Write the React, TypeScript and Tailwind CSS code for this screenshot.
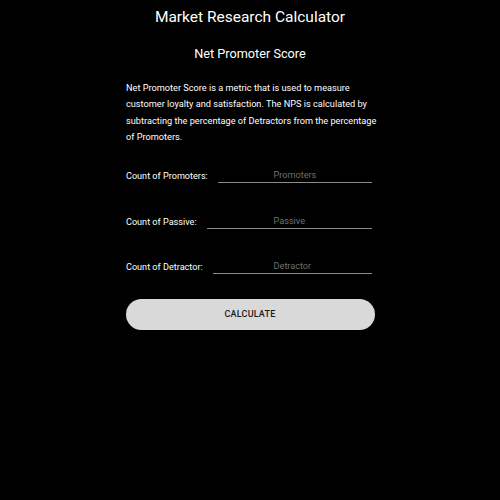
import React from "react";

function Row({ label, placeholder }: { label: string; placeholder: string }) {
  return (
    <div className="flex items-end h-[14px]">
      <span className="text-[9.1px] text-white whitespace-nowrap mr-[10px] leading-[12px] pb-[1px]">{label}</span>
      <div className="flex-1 border-b border-[#8a8a8a] text-center text-[9.1px] text-[#6f6f6f] leading-[12px] pb-[1px]">
        {placeholder}
      </div>
    </div>
  );
}

export default function App() {
  return (
    <div className="w-[500px] h-[500px] bg-black flex flex-col items-center" style={{ fontFamily: "Roboto, 'Noto Sans', sans-serif" }}>
      <div className="text-white text-[15.5px] mt-[6px] leading-[22px]">Market Research Calculator</div>
      <div className="text-white text-[12.7px] mt-[17px] leading-[18px]">Net Promoter Score</div>
      <div className="w-[248px] mt-[17px]">
        <p className="w-[256px] text-white text-[9.2px] leading-[16.3px]">
          Net Promoter Score is a metric that is used to measure customer loyalty and satisfaction. The NPS is calculated by subtracting the percentage of Detractors from the percentage of Promoters.
        </p>
      </div>
      <div className="w-[248px] mt-[24px] flex flex-col gap-[31.5px] pr-[2px]">
        <Row label="Count of Promoters:" placeholder="Promoters" />
        <Row label="Count of Passive:" placeholder="Passive" />
        <Row label="Count of Detractor:" placeholder="Detractor" />
      </div>
      <button className="w-[249px] h-[31px] mt-[25px] rounded-full bg-[#d9d9d9] text-[#1a1a1a] text-[9px] font-medium tracking-[0.2px]">
        CALCULATE
      </button>
    </div>
  );
}
